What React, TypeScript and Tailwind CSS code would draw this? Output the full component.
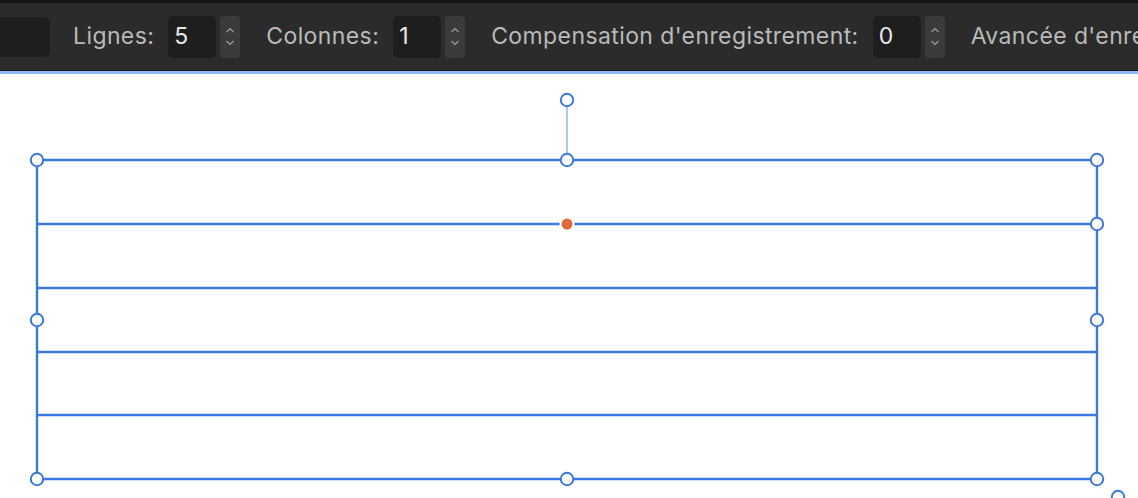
import React from "react";

const FIELDS = [
  { label: "Lignes:", value: "5" },
  { label: "Colonnes:", value: "1" },
  { label: "Compensation d'enregistrement:", value: "0" },
];

const BLUE = "#3b78df";
const ROWS = [160, 224, 288, 352, 415, 479];

const Stepper = () => (
  <div className="flex h-[42px] w-[20px] flex-col items-center justify-center gap-[7px] rounded-[4px] bg-[#3b3b3b]">
    <svg width="10" height="6" viewBox="0 0 10 6">
      <path d="M1.5 5 L5 1.5 L8.5 5" fill="none" stroke="#a0a0a0" strokeWidth="1.1" />
    </svg>
    <svg width="10" height="6" viewBox="0 0 10 6">
      <path d="M1.5 1 L5 4.5 L8.5 1" fill="none" stroke="#a0a0a0" strokeWidth="1.1" />
    </svg>
  </div>
);

const Field = ({ label, value }: { label: string; value: string }) => (
  <div className="flex shrink-0 items-center">
    <span className="mr-[14px] whitespace-nowrap text-[23px] tracking-[0.4px] text-[#bababa]">{label}</span>
    <div className="flex h-[42px] w-[48px] items-center rounded-[5px] bg-[#1e1e1e] pl-[6px] text-[23px] text-[#e8e8e8]">
      {value}
    </div>
    <div className="ml-[4px]">
      <Stepper />
    </div>
  </div>
);

const Handle = ({ x, y }: { x: number; y: number }) => (
  <circle cx={x} cy={y} r="6.2" fill="#ffffff" stroke={BLUE} strokeWidth="2" />
);

export default function App() {
  return (
    <div
      className="flex h-[498px] w-[1138px] flex-col overflow-hidden bg-white"
      style={{ fontFamily: "Inter, 'Noto Sans', sans-serif" }}
    >
      <div className="h-[3px] shrink-0 bg-[#151515]" />
      <div className="flex h-[67px] shrink-0 items-center gap-[26px] overflow-hidden bg-[#2b2b2b]">
        <div className="mr-[-3px] h-[40px] w-[50px] shrink-0 rounded-r-[5px] bg-[#1e1e1e]" />
        {FIELDS.map((f) => (
          <Field key={f.label} label={f.label} value={f.value} />
        ))}
        <span className="whitespace-nowrap text-[23px] tracking-[0.4px] text-[#bababa]">Avancée d'enregistrement:</span>
      </div>
      <div className="h-[1px] shrink-0 bg-[#1a1a1a]" />
      <div className="h-[3px] shrink-0 bg-[#8db6f2]" />
      <svg width="1138" height="424" viewBox="0 74 1138 424" className="block shrink-0">
        <line x1="567" y1="100" x2="567" y2="160" stroke="#8fb3ef" strokeWidth="1.5" />
        <line x1="37" y1="160" x2="37" y2="479" stroke={BLUE} strokeWidth="2.4" />
        <line x1="1097" y1="160" x2="1097" y2="479" stroke={BLUE} strokeWidth="2.4" />
        {ROWS.map((y) => (
          <line key={y} x1="37" y1={y} x2="1097" y2={y} stroke={BLUE} strokeWidth="2.4" />
        ))}
        <circle cx="567" cy="224" r="7.5" fill="#ffffff" />
        <circle cx="567" cy="224" r="5.5" fill="#dc6a41" />
        <Handle x={567} y={100} />
        <Handle x={37} y={160} />
        <Handle x={567} y={160} />
        <Handle x={1097} y={160} />
        <Handle x={1097} y={224} />
        <Handle x={37} y={320} />
        <Handle x={1097} y={320} />
        <Handle x={37} y={479} />
        <Handle x={567} y={479} />
        <Handle x={1097} y={479} />
        <Handle x={1118} y={497} />
      </svg>
    </div>
  );
}
